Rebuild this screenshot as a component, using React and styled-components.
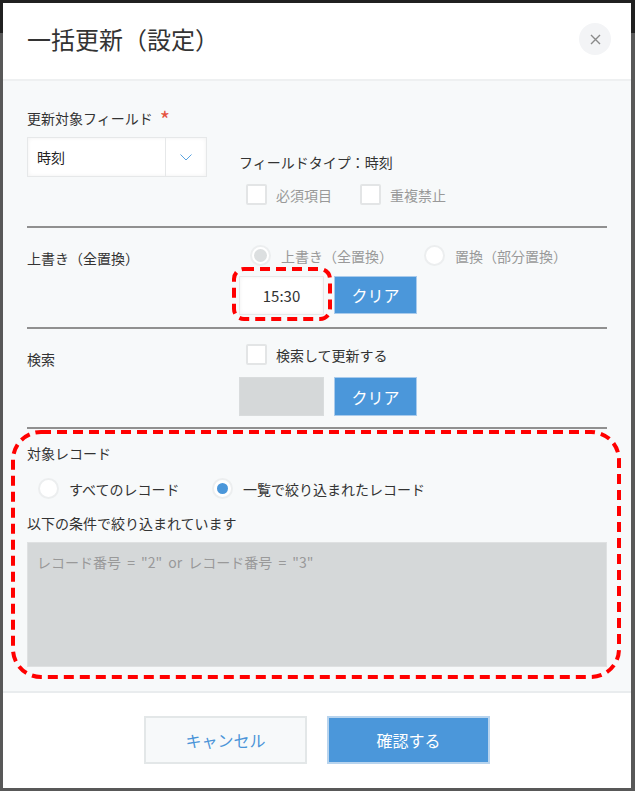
import styled, { createGlobalStyle } from "styled-components";

const GlobalStyle = createGlobalStyle`
  *, *::before, *::after { box-sizing: border-box; }
  html, body { margin: 0; padding: 0; }
  body {
    background: linear-gradient(#202020 0 33px, #585858 33px);
    font-family: "Noto Sans CJK JP", "Noto Sans", sans-serif;
    font-size: 14px;
    color: #333;
  }
`;

const Dialog = styled.div`
  margin: 3px;
  width: 628px;
  height: 785px;
  display: flex;
  flex-direction: column;
  background: #fff;
`;

const Header = styled.header`
  flex: none;
  height: 78px;
  display: flex;
  align-items: center;
  justify-content: space-between;
  padding: 0 20px 4px 24px;
  border-bottom: 2px solid #eef0f1;
`;

const Title = styled.h1`
  margin: 0;
  font-size: 24px;
  font-weight: 400;
  color: #333;
  line-height: 1;
`;

const CloseButton = styled.button`
  width: 32px;
  height: 32px;
  border: 0;
  border-radius: 50%;
  background: #f3f4f6;
  display: flex;
  align-items: center;
  justify-content: center;
  padding: 0;
`;

const Body = styled.div`
  flex: 1;
  min-height: 0;
  background: #f7f9fa;
  padding: 0 24px 0;
`;

const Section = styled.section`
  position: relative;
  display: ${(p) => (p.$row ? "flex" : "block")};
  padding: ${(p) => p.$pad};
  border-bottom: ${(p) => (p.$last ? "none" : "2px solid #909090")};
`;

const Label = styled.div`
  height: 20px;
  line-height: 20px;
  font-size: 14px;
  color: #333;
  margin-top: ${(p) => p.$mt || 0}px;
  width: ${(p) => (p.$w ? `${p.$w}px` : "auto")};
  flex: none;
  white-space: nowrap;
`;

const Required = styled.span`
  position: relative;
  top: 4px;
  color: #e5533f;
  font-size: 22px;
  line-height: 0;
  margin-left: 7px;
`;

const FieldRow = styled.div`
  display: flex;
  gap: 32px;
  margin-top: 9px;
`;

const SelectBox = styled.div`
  width: 180px;
  height: 40px;
  display: flex;
  background: #fff;
  border: 1px solid #e6e8e9;
  box-shadow: inset 0 0 4px rgba(0, 0, 0, 0.06);
`;

const SelectValue = styled.div`
  flex: 1;
  padding-left: 9px;
  line-height: 38px;
  color: #222;
`;

const SelectArrow = styled.div`
  width: 41px;
  border-left: 1px solid #e6e8e9;
  display: flex;
  align-items: center;
  justify-content: center;
`;

const FieldInfo = styled.div`
  padding-top: 15px;
`;

const Content = styled.div`
  flex: 1;
  display: flex;
  flex-direction: column;
`;

const OptionRow = styled.div`
  display: flex;
  height: 21px;
  margin-top: ${(p) => p.$mt || 0}px;
  padding-left: ${(p) => p.$indent || 0}px;
`;

const Option = styled.label`
  display: flex;
  align-items: center;
  gap: ${(p) => p.$gap || 9}px;
  width: ${(p) => (p.$w ? `${p.$w}px` : "auto")};
  height: 21px;
  color: ${(p) => (p.$muted ? "#999" : "#333")};
  line-height: 20px;
  white-space: nowrap;
`;

const CheckBox = styled.span`
  width: 21px;
  height: 21px;
  flex: none;
  background: #fff;
  border: 2px solid #e3e5e6;
  border-radius: 2px;
`;

const Radio = styled.span`
  width: 21px;
  height: 21px;
  flex: none;
  border-radius: 50%;
  background: #fff;
  border: 2px solid #eceeef;
  display: flex;
  align-items: center;
  justify-content: center;
  &::after {
    content: "";
    display: ${(p) => (p.$dot ? "block" : "none")};
    width: ${(p) => (p.$dot === "blue" ? 11 : 13)}px;
    height: ${(p) => (p.$dot === "blue" ? 11 : 13)}px;
    border-radius: 50%;
    background: ${(p) => (p.$dot === "blue" ? "#4b97da" : "#dcdfe0")};
  }
`;

const InputRow = styled.div`
  display: flex;
  gap: 10px;
  margin-top: ${(p) => p.$mt}px;
`;

const Marked = styled.div`
  position: relative;
`;

const TextInput = styled.div`
  width: 85px;
  height: ${(p) => p.$h}px;
  background: ${(p) => (p.$disabled ? "#d5d8d9" : "#fff")};
  border: 1px solid ${(p) => (p.$disabled ? "#d9dcdd" : "#e6e8e9")};
  box-shadow: ${(p) => (p.$disabled ? "none" : "inset 0 0 4px rgba(0,0,0,0.06)")};
  display: flex;
  align-items: center;
  justify-content: center;
  font-size: 15px;
  color: #333;
`;

const BlueButton = styled.button`
  width: ${(p) => p.$w}px;
  height: ${(p) => p.$h}px;
  background: #4b97da;
  border: 1px solid #a9cbec;
  color: #fff;
  font-family: inherit;
  font-size: 16px;
  padding: 0;
`;

const Conditions = styled.div`
  margin-top: 9px;
  height: 125px;
  background: #d5d8d9;
  border: 1px solid #dfe1e2;
  padding: 8px 9px;
  color: #999;
  line-height: 22px;
  word-spacing: 3px;
`;

const Footer = styled.footer`
  flex: none;
  height: 97px;
  border-top: 2px solid #e9ecee;
  display: flex;
  justify-content: center;
  gap: 20px;
  padding-top: 23px;
`;

const FooterButton = styled.button`
  width: 163px;
  height: 48px;
  font-family: inherit;
  font-size: 16px;
  padding: 0;
  border: 2px solid ${(p) => (p.$primary ? "#b8d4ee" : "#e3e7e8")};
  background: ${(p) => (p.$primary ? "#4b97da" : "#f7f9fa")};
  color: ${(p) => (p.$primary ? "#fff" : "#4a94d8")};
`;

const Mark = styled.svg`
  position: absolute;
  left: ${(p) => p.$left}px;
  top: ${(p) => p.$top}px;
  overflow: visible;
  pointer-events: none;
`;

function DashedMark({ left, top, width, height, radius }) {
  return (
    <Mark $left={left} $top={top} width={width} height={height}>
      <rect
        x="2"
        y="2"
        width={width - 4}
        height={height - 4}
        rx={radius}
        fill="none"
        stroke="#f00"
        strokeWidth="4"
        strokeDasharray="10 6"
      />
    </Mark>
  );
}

export default function App() {
  return (
    <>
      <GlobalStyle />
      <Dialog>
        <Header>
          <Title>一括更新（設定）</Title>
          <CloseButton aria-label="閉じる">
            <svg width="11" height="11" viewBox="0 0 11 11">
              <path d="M1 1L10 10M10 1L1 10" stroke="#8a8a8a" strokeWidth="1.4" />
            </svg>
          </CloseButton>
        </Header>
        <Body>
          <Section $pad="27px 0 21px">
            <Label>
              更新対象フィールド<Required>*</Required>
            </Label>
            <FieldRow>
              <SelectBox>
                <SelectValue>時刻</SelectValue>
                <SelectArrow>
                  <svg width="12" height="7" viewBox="0 0 12 7">
                    <path d="M0.5 0.5L6 6L11.5 0.5" fill="none" stroke="#5aa3e0" strokeWidth="1" />
                  </svg>
                </SelectArrow>
              </SelectBox>
              <FieldInfo>
                <Label>フィールドタイプ：時刻</Label>
                <OptionRow $mt={12} $indent={7}>
                  <Option $w={114} $muted>
                    <CheckBox />
                    必須項目
                  </Option>
                  <Option $muted>
                    <CheckBox />
                    重複禁止
                  </Option>
                </OptionRow>
              </FieldInfo>
            </FieldRow>
          </Section>

          <Section $row $pad="17px 0 12px">
            <Label $w={212} $mt={3}>
              上書き（全置換）
            </Label>
            <Content>
              <OptionRow $indent={11}>
                <Option $w={174} $gap={10} $muted>
                  <Radio $dot="gray" />
                  上書き（全置換）
                </Option>
                <Option $gap={10} $muted>
                  <Radio />
                  置換（部分置換）
                </Option>
              </OptionRow>
              <InputRow $mt={10}>
                <Marked>
                  <TextInput $h={39}>15:30</TextInput>
                  <DashedMark left={-7} top={-9} width={100} height={54} radius={10} />
                </Marked>
                <BlueButton $w={83} $h={38}>
                  クリア
                </BlueButton>
              </InputRow>
            </Content>
          </Section>

          <Section $row $pad="15px 0 11px">
            <Label $w={212} $mt={5}>
              検索
            </Label>
            <Content>
              <OptionRow $indent={7}>
                <Option>
                  <CheckBox />
                  検索して更新する
                </Option>
              </OptionRow>
              <InputRow $mt={12}>
                <TextInput $h={39} $disabled />
                <BlueButton $w={83} $h={39}>
                  クリア
                </BlueButton>
              </InputRow>
            </Content>
          </Section>

          <Section $last $pad="14px 0 0">
            <Label>対象レコード</Label>
            <OptionRow $mt={15} $indent={11}>
              <Option $w={174} $gap={10}>
                <Radio />
                すべてのレコード
              </Option>
              <Option $gap={10}>
                <Radio $dot="blue" />
                一覧で絞り込まれたレコード
              </Option>
            </OptionRow>
            <Label $mt={14}>以下の条件で絞り込まれています</Label>
            <Conditions>レコード番号 = "2" or レコード番号 = "3"</Conditions>
            <DashedMark left={-16} top={1} width={610} height={249} radius={28} />
          </Section>
        </Body>
        <Footer>
          <FooterButton>キャンセル</FooterButton>
          <FooterButton $primary>確認する</FooterButton>
        </Footer>
      </Dialog>
    </>
  );
}
